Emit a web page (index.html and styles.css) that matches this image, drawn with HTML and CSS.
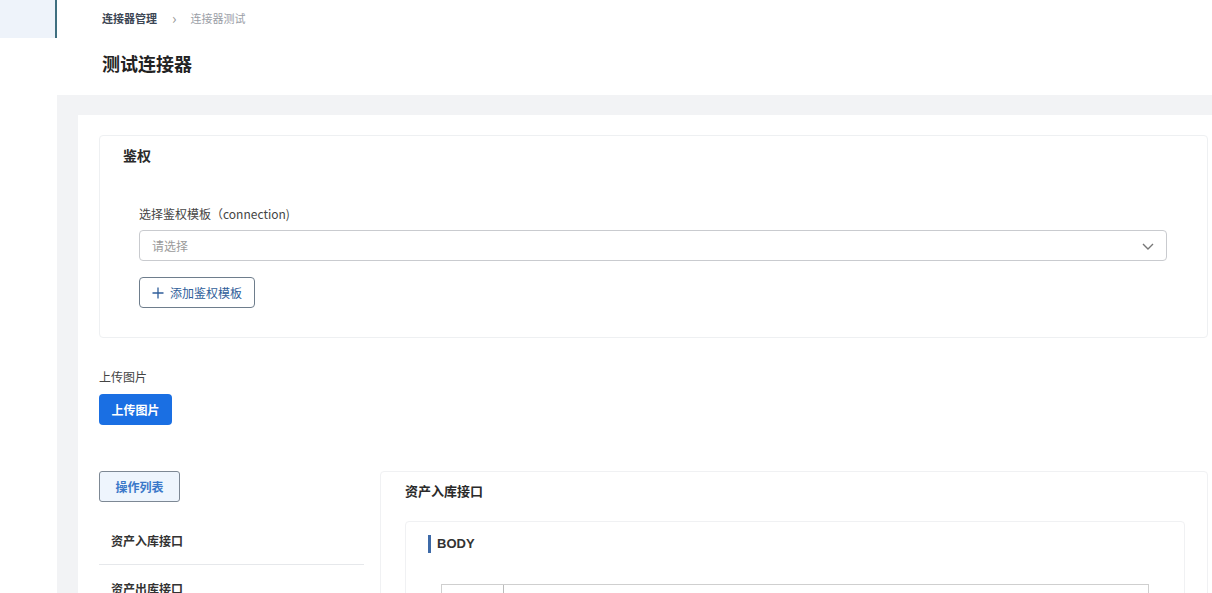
FILE: index.html
```html
<!DOCTYPE html>
<html lang="zh">
<head>
<meta charset="utf-8">
<link rel="stylesheet" href="styles.css">
</head>
<body>
<div class="layout">
  <aside class="sidebar">
    <div class="side-item"></div>
  </aside>
  <main class="main">
    <header class="page-head">
      <nav class="crumbs"><span class="crumb-a">连接器管理</span><span class="crumb-sep">›</span><span class="crumb-b">连接器测试</span></nav>
      <h1 class="title">测试连接器</h1>
    </header>
    <div class="gray">
      <div class="card">
        <section class="auth">
          <h2 class="auth-title">鉴权</h2>
          <div class="auth-form">
            <div class="label">选择鉴权模板（connection)</div>
            <div class="select">
              <span class="placeholder">请选择</span>
              <svg class="chev" width="14" height="14" viewBox="0 0 14 14"><path d="M2 5l5 5 5-5" fill="none" stroke="#777" stroke-width="1.4"/></svg>
            </div>
            <button class="btn-outline"><svg width="12" height="12" viewBox="0 0 12 12"><path d="M6 0.5v11M0.5 6h11" stroke="#2f5e9a" stroke-width="1.3"/></svg>添加鉴权模板</button>
          </div>
        </section>
        <section class="upload">
          <div class="upload-label">上传图片</div>
          <button class="btn-primary">上传图片</button>
        </section>
        <section class="ops">
          <div class="ops-left">
            <button class="btn-tab">操作列表</button>
            <ul class="op-list">
              <li class="op-item">资产入库接口</li>
              <li class="op-item">资产出库接口</li>
            </ul>
          </div>
          <div class="ops-right">
            <div class="panel-title">资产入库接口</div>
            <div class="inner">
              <div class="body-title">BODY</div>
              <div class="editor"><div class="gutter"></div><div class="code"></div></div>
            </div>
          </div>
        </section>
      </div>
    </div>
  </main>
</div>
</body>
</html>
```
FILE: styles.css
```css
* { box-sizing: border-box; }
html, body { margin: 0; padding: 0; background: #fff; overflow: hidden; }
body { font-family: "Noto Sans CJK SC", "Noto Sans", "Liberation Sans", sans-serif; color: #333; width: 1212px; height: 593px; }
.layout { display: flex; height: 593px; }
.sidebar { width: 57px; flex: none; }
.side-item { height: 38px; background: #eef3fa; border-right: 2px solid #3f6f80; }
.main { flex: 1; min-width: 0; display: flex; flex-direction: column; }
.page-head { flex: none; padding: 9px 0 0 45px; height: 95px; }
.crumbs { font-size: 11px; line-height: 18px; display: flex; align-items: center; }
.crumb-a { color: #3c4654; font-weight: 700; }
.crumb-sep { color: #999; margin: 0 14px 0 15px; font-size: 15px; line-height: 18px; }
.crumb-b { color: #9a9ea6; }
.title { margin: 23px 0 0; font-size: 18px; line-height: 26px; font-weight: 700; color: #222; }
.gray { flex: 1; min-height: 0; background: #f2f3f5; padding: 20px 0 0 21px; }
.card { background: #fff; height: 100%; padding: 20px 4px 0 21px; }
.auth { border: 1px solid #eef0f2; border-radius: 4px; height: 203px; padding: 9px 40px 0 0; }
.auth-title { margin: 0 0 0 23px; font-size: 14px; line-height: 20px; font-weight: 700; color: #2a2a2a; }
.auth-form { padding-left: 39px; margin-top: 41px; }
.label { font-size: 12px; line-height: 16px; color: #444; }
.select { margin-top: 8px; height: 31px; border: 1px solid #c9cbcf; border-radius: 4px; display: flex; align-items: center; justify-content: space-between; padding: 0 11px 0 12px; }
.placeholder { font-size: 12px; color: #9a9a9a; }
.btn-outline { margin-top: 16px; height: 31px; width: 116px; border: 1px solid #6e7d8c; border-radius: 4px; background: #fff; color: #2f5e9a; font-family: inherit; font-size: 12px; display: flex; align-items: center; justify-content: center; gap: 6px; padding: 0; }
.upload { padding: 31px 0 0 0; }
.upload-label { font-size: 12px; line-height: 16px; color: #444; }
.btn-primary { margin-top: 9px; height: 31px; width: 73px; border: none; border-radius: 4px; background: #1a6fe3; color: #fff; font-family: inherit; font-size: 12px; font-weight: 600; padding: 0; }
.ops { display: flex; gap: 16px; margin-top: 46px; }
.ops-left { width: 265px; flex: none; }
.btn-tab { height: 31px; width: 81px; border: 1px solid #7d8894; border-radius: 3px; background: #eef5fd; color: #3a78c9; font-family: inherit; font-size: 12px; font-weight: 600; padding: 0; }
.op-list { list-style: none; margin: 15px 0 0; padding: 0; }
.op-item { font-size: 12px; font-weight: 600; color: #333; padding: 0 0 0 12px; height: 47px; line-height: 47px; }
.op-item + .op-item { border-top: 1px solid #e6e8eb; }
.ops-right { flex: 1; border: 1px solid #f0f1f3; border-radius: 4px; height: 140px; padding: 10px 22px 0 24px; }
.panel-title { font-size: 13px; font-weight: 700; line-height: 18px; color: #2a2a2a; }
.inner { margin-top: 21px; border: 1px solid #f0f1f3; border-radius: 4px; height: 100px; padding: 13px 35px 0 22px; }
.body-title { font-size: 13px; font-weight: 700; line-height: 18px; color: #333; border-left: 3px solid #3e6aa8; padding-left: 6px; font-family: "Liberation Sans", "Noto Sans CJK SC", sans-serif; }
.editor { margin-top: 31px; margin-left: 13px; height: 20px; border: 1px solid #cfcfcf; display: flex; }
.gutter { width: 62px; border-right: 1px solid #bbb; }
.code { flex: 1; }
```
